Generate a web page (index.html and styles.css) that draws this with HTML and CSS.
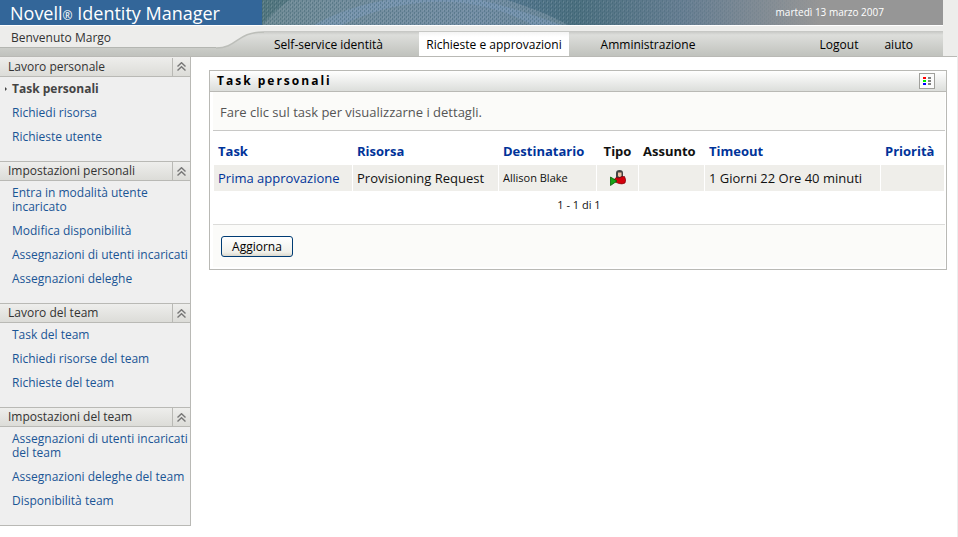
FILE: index.html
```
<!DOCTYPE html>
<html lang="it">
<head>
    <meta charset="UTF-8">
    <meta name="viewport" content="width=device-width, initial-scale=1.0">
    <title>Novell Identity Manager</title>
    <link rel="stylesheet" href="styles.css">
</head>
<body>
    <svg class="defs" aria-hidden="true">
        <symbol id="chevrons" viewBox="0 0 9 9">
            <path d="M0.5 4.5 L4.5 0.7 L8.5 4.5 M0.5 8.5 L4.5 4.7 L8.5 8.5" fill="none" stroke="#777" stroke-width="1.4"/>
        </symbol>
    </svg>

    <header class="header">
        <div class="banner">
            <h1>Novell<small>®</small> Identity Manager</h1>
            <div class="banner-art">
                <svg viewBox="0 0 681 25" preserveAspectRatio="none" aria-hidden="true">
                    <defs>
                        <linearGradient id="art">
                            <stop offset="0" stop-color="#54777f"/>
                            <stop offset="0.12" stop-color="#5b7c8c"/>
                            <stop offset="0.32" stop-color="#5c7d99"/>
                            <stop offset="0.46" stop-color="#4c7080"/>
                            <stop offset="0.62" stop-color="#687f93"/>
                            <stop offset="0.82" stop-color="#969696"/>
                            <stop offset="1" stop-color="#969696"/>
                        </linearGradient>
                        <linearGradient id="fade">
                            <stop offset="0.4" stop-color="#fff"/>
                            <stop offset="0.82" stop-color="#000"/>
                        </linearGradient>
                        <pattern id="weave" width="4" height="4" patternUnits="userSpaceOnUse">
                            <path d="M0 0h1v2h-1zM2 2h1v2h-1z" fill="#24505e" opacity="0.3"/>
                            <path d="M1 1h1v2h-1z" fill="#a4b8c0" opacity="0.25"/>
                        </pattern>
                        <mask id="weave-mask"><rect width="681" height="25" fill="url(#fade)"/></mask>
                    </defs>
                    <rect width="681" height="25" fill="url(#art)"/>
                    <path d="M0 25C10 14 18 6 28 0H245C270 8 290 16 306 25Z" fill="#a0b0bc" opacity="0.35"/>
                    <path d="M52 25C75 12 100 4 125 0H218C245 6 270 15 300 25H270C215 -6 145 -6 80 25Z" fill="#7f9dc0" opacity="0.45"/>
                    <rect width="681" height="25" fill="url(#weave)" mask="url(#weave-mask)"/>
                </svg>
                <span class="date">martedì 13 marzo 2007</span>
            </div>
        </div>
        <div class="navbar">
            <div class="welcome">Benvenuto Margo</div>
            <svg class="curve" viewBox="0 0 48 32" aria-hidden="true">
                <path d="M0 0H48V6C20 6 22 22 0 22Z" fill="#ededeb"/>
                <path d="M0 22C22 22 20 6 48 6" fill="none" stroke="#bcbeb9" stroke-width="1.5"/>
            </svg>
            <nav class="tabs">
                <a href="#">Self-service identità</a>
                <a href="#" class="active">Richieste e approvazioni</a>
                <a href="#">Amministrazione</a>
            </nav>
            <div class="session">
                <a href="#">Logout</a>
                <a href="#">aiuto</a>
            </div>
        </div>
    </header>

    <div class="page">
        <aside class="sidebar">
            <section>
                <h2>Lavoro personale <button type="button" aria-label="Comprimi"><svg><use href="#chevrons"/></svg></button></h2>
                <ul>
                    <li class="current"><a href="#">Task personali</a></li>
                    <li><a href="#">Richiedi risorsa</a></li>
                    <li><a href="#">Richieste utente</a></li>
                </ul>
            </section>
            <section>
                <h2>Impostazioni personali <button type="button" aria-label="Comprimi"><svg><use href="#chevrons"/></svg></button></h2>
                <ul>
                    <li><a href="#">Entra in modalità utente<br>incaricato</a></li>
                    <li><a href="#">Modifica disponibilità</a></li>
                    <li><a href="#">Assegnazioni di utenti incaricati</a></li>
                    <li><a href="#">Assegnazioni deleghe</a></li>
                </ul>
            </section>
            <section>
                <h2>Lavoro del team <button type="button" aria-label="Comprimi"><svg><use href="#chevrons"/></svg></button></h2>
                <ul>
                    <li><a href="#">Task del team</a></li>
                    <li><a href="#">Richiedi risorse del team</a></li>
                    <li><a href="#">Richieste del team</a></li>
                </ul>
            </section>
            <section>
                <h2>Impostazioni del team <button type="button" aria-label="Comprimi"><svg><use href="#chevrons"/></svg></button></h2>
                <ul>
                    <li><a href="#">Assegnazioni di utenti incaricati<br>del team</a></li>
                    <li><a href="#">Assegnazioni deleghe del team</a></li>
                    <li><a href="#">Disponibilità team</a></li>
                </ul>
            </section>
        </aside>

        <main class="content">
            <div class="portlet">
                <div class="portlet-title">
                    <h2>Task personali</h2>
                    <button type="button" class="legend-btn" aria-label="Legenda">
                        <svg viewBox="0 0 8 8" shape-rendering="crispEdges">
                            <path d="M0 0h3v2h-3z" fill="#f00"/>
                            <path d="M0 3h3v2h-3z" fill="#0e0"/>
                            <path d="M0 6h3v2h-3z" fill="#00f"/>
                            <path d="M5 0h3v2h-3zM5 3h3v2h-3zM5 6h3v2h-3z" fill="#808080"/>
                        </svg>
                    </button>
                </div>
                <p class="hint">Fare clic sul task per visualizzarne i dettagli.</p>
                <div class="results">
                    <table>
                        <colgroup>
                            <col class="c-task"><col class="c-resource"><col class="c-recipient"><col class="c-type">
                            <col class="c-taken"><col class="c-timeout"><col class="c-priority">
                        </colgroup>
                        <thead>
                            <tr>
                                <th><a href="#">Task</a></th>
                                <th><a href="#">Risorsa</a></th>
                                <th><a href="#">Destinatario</a></th>
                                <th>Tipo</th>
                                <th>Assunto</th>
                                <th><a href="#">Timeout</a></th>
                                <th><a href="#">Priorità</a></th>
                            </tr>
                        </thead>
                        <tbody>
                            <tr>
                                <td><a href="#">Prima approvazione</a></td>
                                <td>Provisioning Request</td>
                                <td class="recipient">Allison Blake</td>
                                <td class="type">
                                    <svg viewBox="0 0 16 16" role="img" aria-label="Assegnato">
                                        <path d="M6 8V3Q6 0 9.500 0Q13 0 13 3V8Z" fill="#444"/>
                                        <path d="M8 2.500h3.500v3.500q-1.700 2-3.500 0z" fill="#efc4a8"/>
                                        <path d="M4.500 9Q6 6.500 9 8Q12 6 14.500 6.500Q16.500 10 15 13Q12 14.500 9 13.500L5 12Z" fill="#d3000c" stroke="#7c0008" stroke-width="0.7"/>
                                        <path d="M0.500 7L7 11L0.500 15.500Z" fill="#17a317" stroke="#075c07" stroke-width="0.8"/>
                                    </svg>
                                </td>
                                <td></td>
                                <td>1 Giorni 22 Ore 40 minuti</td>
                                <td></td>
                            </tr>
                        </tbody>
                    </table>
                    <p class="pager">1 - 1 di 1</p>
                </div>
                <div class="actions">
                    <button type="button" class="btn">Aggiorna</button>
                </div>
            </div>
        </main>
    </div>
</body>
</html>
```
FILE: styles.css
```
* {
    margin: 0;
    padding: 0;
    box-sizing: border-box;
}

body {
    font-family: 'Trebuchet MS', 'Open Sans', sans-serif;
    font-size: 12px;
    line-height: 14px;
    color: #111;
    background: white;
    border-right: 1px solid #ededed;
    min-height: 100vh;
}

a {
    color: #003399;
    text-decoration: none;
}

a:hover {
    text-decoration: underline;
}

.defs {
    display: none;
}

.header {
    background: #ededeb;
    border-bottom: 1px solid #b9b9b5;
    padding-right: 14px;
}

.banner {
    display: flex;
    height: 26px;
    border-bottom: 1px solid white;
}

.banner h1 {
    width: 262px;
    padding-left: 10px;
    background: #336699;
    color: white;
    font-size: 18px;
    font-weight: normal;
    line-height: 26px;
    white-space: nowrap;
}

.banner h1 small {
    font-size: 12px;
}

.banner-art {
    flex: 1;
    position: relative;
}

.banner-art svg {
    display: block;
    width: 100%;
    height: 25px;
}

.date {
    position: absolute;
    top: 5px;
    right: 59px;
    color: white;
    font-size: 10px;
}

.navbar {
    display: flex;
    height: 30px;
    background: linear-gradient(#ededeb 5px, #c4c5c2 5px, #dddedb 9px, #c0c2bd);
}

.welcome {
    width: 216px;
    height: 22px;
    padding: 5px 11px;
    background: #ededeb;
    border-bottom: 1px solid #b4b6b1;
    color: #333;
}

.curve {
    width: 48px;
    height: 32px;
    margin-bottom: -2px;
}

.tabs {
    display: flex;
    flex: 1;
    padding-top: 6px;
}

.tabs a,
.session a {
    color: black;
    line-height: 26px;
}

.tabs a {
    width: 150px;
    height: 24px;
    text-align: center;
    white-space: nowrap;
}

.tabs a:first-child {
    width: 155px;
    padding-right: 26px;
}

.tabs .active {
    background: linear-gradient(#f4f4f4, white 5px);
}

.tabs a:last-child {
    width: 158px;
}

.session {
    display: flex;
    gap: 26px;
    height: 30px;
    padding: 6px 30px 0 0;
}

.page {
    display: flex;
    align-items: flex-start;
}

.sidebar {
    flex: none;
    width: 191px;
    background: #efefef;
    border: solid #b9b9b5;
    border-width: 0 1px 1px 0;
}

.sidebar h2 {
    display: flex;
    justify-content: space-between;
    align-items: center;
    height: 20px;
    padding-left: 8px;
    background: linear-gradient(#eeeeec, #dcdcd8);
    border: solid #b9b9b5;
    border-width: 1px 0;
    color: #333;
    font-size: 12px;
    font-weight: normal;
}

.sidebar section:first-child h2 {
    border-top: none;
}

.sidebar h2 button {
    display: flex;
    align-items: center;
    justify-content: center;
    width: 18px;
    height: 18px;
    border: none;
    border-left: 1px solid #b9b9b5;
    background: none;
    cursor: pointer;
}

.sidebar h2 svg {
    width: 9px;
    height: 9px;
}

.sidebar ul {
    padding: 5px 0 17px;
    list-style: none;
}

.sidebar li {
    margin-bottom: 10px;
    padding-left: 12px;
    white-space: nowrap;
}

.sidebar li:last-child {
    margin-bottom: 0;
}

.sidebar li a {
    color: #1a5595;
}

.sidebar .current {
    position: relative;
    font-weight: bold;
}

.sidebar .current a {
    color: #444;
}

.sidebar .current::before {
    content: '';
    position: absolute;
    left: 5px;
    top: 5px;
    border: 2px solid transparent;
    border-left-color: #444;
}

.content {
    flex: 1;
    padding: 13px 10px 0 18px;
}

.portlet {
    border: 1px solid #b9b9b5;
    padding: 0 1px 2px 3px;
}

.portlet-title {
    display: flex;
    align-items: center;
    justify-content: space-between;
    height: 21px;
    margin: 0 -1px 0 -3px;
    padding: 0 11px 0 7px;
    background: linear-gradient(white, #dcdedb);
    border-bottom: 1px solid #b9b9b5;
}

.portlet-title h2 {
    color: black;
    font-size: 12px;
    letter-spacing: 2px;
}

.legend-btn {
    display: flex;
    align-items: center;
    justify-content: center;
    width: 16px;
    height: 16px;
    border: 1px solid #a0a09c;
    background: #fbfbfb;
    cursor: pointer;
}

.legend-btn svg {
    width: 8px;
    height: 8px;
}

.hint {
    height: 38px;
    padding: 13px 7px;
    background: #fbfbf9;
    color: #555;
    font-size: 13px;
}

.results {
    border-top: 1px solid #c8c8c6;
    border-bottom: 1px solid #dcdcda;
}

table {
    width: 100%;
    table-layout: fixed;
    border-collapse: separate;
    border-spacing: 1px 0;
    font-size: 13px;
}

.c-resource { width: 145px; }
.c-recipient { width: 97px; }
.c-type { width: 41px; }
.c-taken { width: 65px; }
.c-timeout { width: 175px; }
.c-priority { width: 63px; }

th,
td {
    padding: 0 4px;
    text-align: left;
    white-space: nowrap;
}

th {
    height: 34px;
    padding-top: 6px;
}

th:nth-child(4) {
    padding: 6px 0 0;
    text-align: center;
}

td {
    height: 26px;
    background: #efeeea;
}

.recipient {
    font-size: 11px;
}

.type {
    text-align: center;
}

.type svg {
    display: inline-block;
    width: 16px;
    height: 16px;
    vertical-align: middle;
}

.pager {
    height: 33px;
    padding-top: 7px;
    font-size: 11px;
    text-align: center;
}

.actions {
    padding: 11px 8px 10px;
    background: #fbfbf9;
}

.btn {
    display: block;
    width: 72px;
    height: 21px;
    border: 1px solid #003c74;
    border-radius: 3px;
    background: linear-gradient(white, #f0f0ea 80%, #dcd8cc);
    color: black;
    font-family: inherit;
    font-size: 12px;
    cursor: pointer;
}
```
